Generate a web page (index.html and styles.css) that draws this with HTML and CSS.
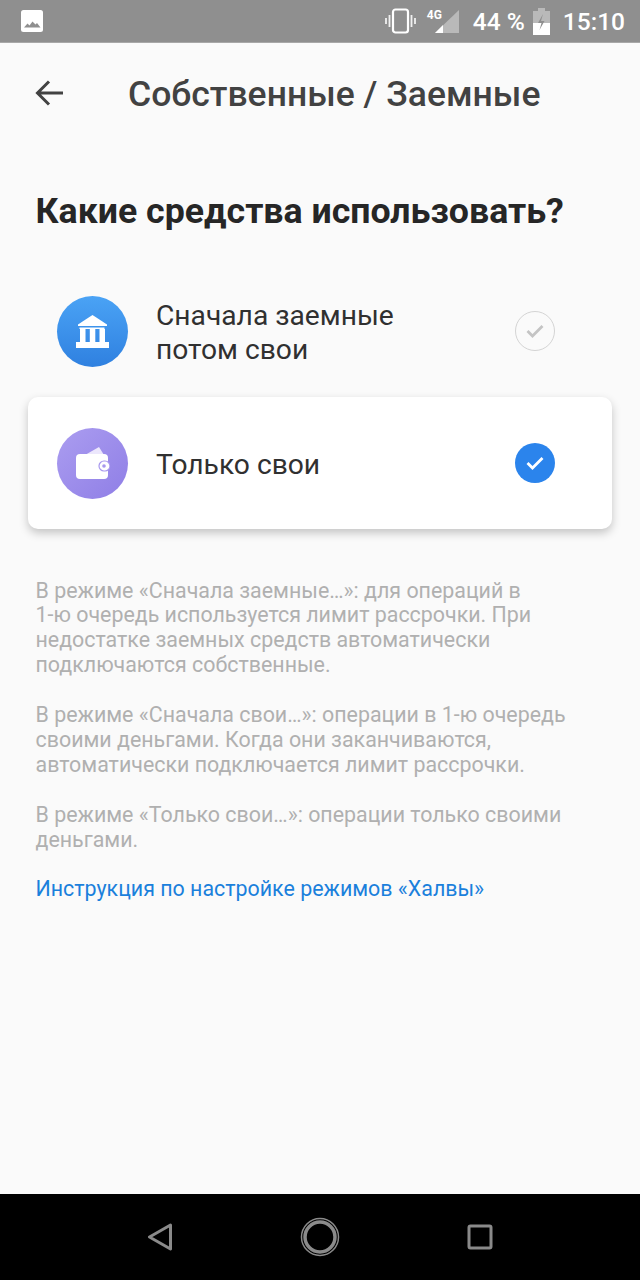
FILE: index.html
```html
<!DOCTYPE html>
<html lang="ru">
<head>
<meta charset="utf-8">
<title>Собственные / Заемные</title>
<link rel="stylesheet" href="styles.css">
</head>
<body>
<div class="screen">
  <header class="status">
    <svg class="st-image" width="24" height="24" viewBox="0 0 24 24"><rect x="1" y="1" width="22" height="22" rx="2.500" fill="#fff"/><path d="M4 18.500l3.500-4 2 2 3-4 3 3 1.500-1.500 3.500 4.500z" fill="#8f8f8f"/></svg>
    <div class="status-right">
      <svg class="st-vib" width="31" height="26" viewBox="0 0 31 26"><rect x="8" y="1.500" width="15" height="23" rx="2.500" fill="none" stroke="#fff" stroke-width="2.200"/><path d="M4.500 7v12M1 10v6M26.500 7v12M30 10v6" stroke="#f0f0f0" stroke-width="1.800" fill="none"/></svg>
      <div class="st-signal">
        <span class="st-4g">4G</span>
        <svg width="26" height="26" viewBox="0 0 26 26"><path d="M25 2v23H1z" fill="#b9b9b9"/><path d="M9 17v8H1z" fill="#fff"/></svg>
      </div>
      <span class="st-batt-text">44 %</span>
      <svg class="st-batt" width="17" height="27" viewBox="0 0 17 27"><path d="M5 0h7v3h5v24H0V3h5z" fill="#b9b9b9"/><path d="M0 15h17v12H0z" fill="#fff"/><path d="M10 6L5 15h3.500l-2 7 5-9H8z" fill="#8f8f8f"/></svg>
      <span class="st-time">15:10</span>
    </div>
  </header>

  <main class="content">
    <div class="toolbar">
      <svg class="back" width="30" height="30" viewBox="0 0 30 30"><path d="M28 15H3M14 3.500L2.500 15 14 26.500" fill="none" stroke="#424242" stroke-width="3"/></svg>
      <h1 class="title">Собственные / Заемные</h1>
    </div>

    <h2 class="question">Какие средства использовать?</h2>

    <div class="options">
      <div class="option">
        <span class="avatar avatar-blue">
          <svg width="33" height="33" viewBox="0 0 33 33"><path d="M16.500 0L31 9.500V11H2V9.500z" fill="#fff"/><path d="M3.500 12.500h25V14h-25z" fill="#fff"/><path d="M4 14h5.500v13H4zM13.800 14h5.500v13h-5.500zM23.500 14H29v13h-5.500z" fill="#fff"/><path d="M0 27h33v6H0z" fill="#fff"/></svg>
        </span>
        <span class="option-label">Сначала заемные<br>потом свои</span>
        <span class="check check-off">
          <svg width="20" height="16" viewBox="0 0 20 16"><path d="M2.500 8l5 5 10-10" fill="none" stroke="#c4c4c4" stroke-width="2.800"/></svg>
        </span>
      </div>
      <div class="option option-active">
        <span class="avatar avatar-violet">
          <svg width="34" height="32" viewBox="0 0 34 32"><path d="M9 8L23 0l5 8z" fill="#ece7fc"/><rect x="0" y="7" width="32" height="25" rx="4" fill="#fff"/><rect x="23" y="14" width="11" height="10" rx="5" fill="#fff" stroke="#a898ee" stroke-width="1.200"/><circle cx="28" cy="19" r="1.800" fill="#a898ee"/></svg>
        </span>
        <span class="option-label">Только свои</span>
        <span class="check check-on">
          <svg width="20" height="16" viewBox="0 0 20 16"><path d="M2.500 8l5 5 10-10" fill="none" stroke="#fff" stroke-width="2.800"/></svg>
        </span>
      </div>
    </div>

    <div class="notes">
      <p>В режиме «Сначала заемные…»: для операций в<br>1-ю очередь используется лимит рассрочки. При<br>недостатке заемных средств автоматически<br>подключаются собственные.</p>
      <p>В режиме «Сначала свои…»: операции в 1-ю очередь<br>своими деньгами. Когда они заканчиваются,<br>автоматически подключается лимит рассрочки.</p>
      <p>В режиме «Только свои…»: операции только своими<br>деньгами.</p>
      <a class="link" href="#">Инструкция по настройке режимов «Халвы»</a>
    </div>
  </main>

  <nav class="navbar">
    <svg width="26" height="28" viewBox="0 0 26 28"><path d="M23.500 2L2.500 14l21 12z" fill="none" stroke="#8a8a8a" stroke-width="3" stroke-linejoin="round"/></svg>
    <svg width="40" height="40" viewBox="0 0 40 40"><circle cx="20" cy="20" r="18.500" fill="none" stroke="#8a8a8a" stroke-width="1.500"/><circle cx="20" cy="20" r="15" fill="none" stroke="#8a8a8a" stroke-width="3.500"/></svg>
    <svg width="26" height="26" viewBox="0 0 26 26"><rect x="2" y="2" width="22" height="22" rx="1.500" fill="none" stroke="#8a8a8a" stroke-width="3"/></svg>
  </nav>
</div>
</body>
</html>
```
FILE: styles.css
```css
* { box-sizing: border-box; }
html, body { margin: 0; padding: 0; }
body { font-family: Roboto, "Noto Sans", sans-serif; background: #fafafa; }
.screen { width: 640px; height: 1280px; display: flex; flex-direction: column; overflow: hidden; }

.status { height: 43px; flex: none; background: #8f8f8f; border-bottom: 1px solid #a8a8a8; display: flex; align-items: center; justify-content: space-between; padding: 0 15px 0 20px; color: #fff; }
.status-right { display: flex; align-items: center; }
.st-vib { margin-right: 11px; }
.st-signal { position: relative; width: 26px; height: 26px; margin-right: 13px; margin-left: 7px; }
.st-signal svg { display: block; }
.st-4g { position: absolute; left: -7px; top: 0; font-size: 12px; font-weight: 700; line-height: 14px; }
.st-batt-text { font-size: 24.500px; font-weight: 500; margin-right: 8px; }
.st-batt { margin-right: 13px; }
.st-time { font-size: 24.500px; font-weight: 500; }

.content { flex: 1; background: #fafafa; padding: 0 28px; }
.toolbar { display: flex; align-items: center; height: 102px; padding-left: 7px; }
.back { flex: none; margin-bottom: 2px; }
.title { margin: 0 0 0 63px; font-size: 35.500px; font-weight: 500; color: #424242; white-space: nowrap; }
.question { margin: 44px 0 0 7.500px; font-size: 35.700px; font-weight: 700; color: #262626; line-height: 44px; }

.options { margin-top: 32px; }
.option { height: 132px; display: flex; align-items: center; padding: 0 57px 0 29px; border-radius: 10px; }
.option-active { background: #fff; box-shadow: 0 4px 10px rgba(0,0,0,.22); }
.avatar { width: 71px; height: 71px; border-radius: 50%; display: flex; align-items: center; justify-content: center; flex: none; }
.avatar-blue { background: linear-gradient(180deg, #4aa3f5, #2f80e0); }
.avatar-violet { background: linear-gradient(135deg, #ab9df0, #8f7ee6); }
.option-label { flex: 1; margin-left: 28px; padding-top: 3px; font-size: 28.200px; line-height: 33.500px; color: #303030; }
.check { width: 40px; height: 40px; border-radius: 50%; display: flex; align-items: center; justify-content: center; flex: none; }
.check-off { border: 1px solid #d4d4d4; }
.check-on { background: #2b84ec; }

.notes { margin: 49.500px 0 0 7.500px; font-size: 21.400px; line-height: 24.900px; color: #b0b0b0; }
.notes p { margin: 0 0 24.900px; }
.link { color: #1a80dc; text-decoration: none; }

.navbar { height: 86px; flex: none; background: #000; display: flex; align-items: center; justify-content: space-between; padding: 0 147px; }
```
